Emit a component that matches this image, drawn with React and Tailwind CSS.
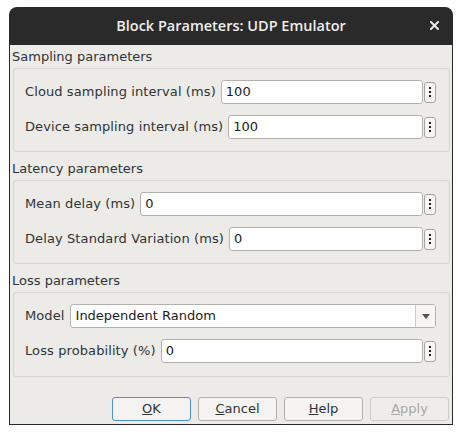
import React from "react";

const font = { fontFamily: '"DejaVu Sans", sans-serif' };

function Dots() {
  return (
    <div className="ml-[1px] flex h-[21px] w-[12px] shrink-0 flex-col items-center justify-center gap-[2px] rounded-[3px] border border-[#a8a5a0] bg-[#f6f5f4]">
      <div className="h-[2px] w-[2px] bg-[#1e1e1e]" />
      <div className="h-[2px] w-[2px] bg-[#1e1e1e]" />
      <div className="h-[2px] w-[2px] bg-[#1e1e1e]" />
    </div>
  );
}

function Field({ label, value }) {
  return (
    <div className="flex h-[24px] items-center">
      <span className="mr-[5px] shrink-0 text-[13px] tracking-[0.1px] text-[#2e3436]">{label}</span>
      <div className="flex h-[24px] flex-1 items-center rounded-[3px] border border-[#b5b2ad] bg-white px-[4px] text-[13px] text-[#1c1c1c]">
        {value}
      </div>
      <Dots />
    </div>
  );
}

function Group({ children, last }) {
  return (
    <div
      className={
        "ml-[3px] mr-[2px] flex flex-col gap-[11px] rounded-[3px] border border-[#d8d5d0] pl-[11px] pr-[13px] pt-[11px] " +
        (last ? "pb-[13px]" : "pb-[12px]")
      }
    >
      {children}
    </div>
  );
}

function Header({ children, first }) {
  return (
    <div className={"flex items-center pl-[2px] text-[13px] text-[#2e3436] " + (first ? "h-[23px]" : "mt-[5px] h-[23px]")}>
      {children}
    </div>
  );
}

function Btn({ children, primary, disabled }) {
  return (
    <div
      className={
        "flex h-[24px] w-[79px] items-center justify-center rounded-[3px] border text-[13px] " +
        (primary
          ? "border-[#4f8fd0] bg-[#f4f3f2] text-[#2e3436]"
          : disabled
          ? "border-[#cfccc7] bg-[#efedea] text-[#a9a7a3]"
          : "border-[#b3b0ab] bg-[#f4f3f2] text-[#2e3436]")
      }
    >
      {children}
    </div>
  );
}

export default function App() {
  return (
    <div className="h-[434px] w-[462px] bg-white pl-[9px] pt-[7px]" style={font}>
      <div className="flex h-[418px] w-[444px] flex-col overflow-hidden rounded-t-[8px]">
        <div className="relative flex h-[38px] shrink-0 items-center justify-center bg-[#2a2a2a]">
          <span
            className="text-[14.5px] font-semibold text-[#eeeeec]"
            style={{ fontFamily: '"Open Sans", sans-serif' }}
          >
            Block Parameters: UDP Emulator
          </span>
          <svg className="absolute left-[421px] top-[14px]" width="9" height="9" viewBox="0 0 9 9">
            <path d="M1 1L8 8M8 1L1 8" stroke="#e8e8e8" strokeWidth="2" strokeLinecap="square" />
          </svg>
        </div>
        <div className="flex flex-1 flex-col border-x border-b border-[#2a2a2a] bg-[#edebe8]">
          <Header first>Sampling parameters</Header>
          <Group>
            <Field label="Cloud sampling interval (ms)" value="100" />
            <Field label="Device sampling interval (ms)" value="100" />
          </Group>
          <Header>Latency parameters</Header>
          <Group>
            <Field label="Mean delay (ms)" value="0" />
            <Field label="Delay Standard Variation (ms)" value="0" />
          </Group>
          <Header>Loss parameters</Header>
          <Group last>
            <div className="flex h-[24px] items-center">
              <span className="mr-[5px] shrink-0 text-[13px] tracking-[0.1px] text-[#2e3436]">Model</span>
              <div className="flex h-[24px] flex-1 items-center rounded-[3px] border border-[#b5b2ad] bg-white text-[13px] text-[#1c1c1c]">
                <span className="flex-1 px-[5px]">Independent Random</span>
                <div className="flex h-full w-[20px] items-center justify-center border-l border-[#cfccc7] bg-[#f6f5f4]">
                  <svg width="8" height="5" viewBox="0 0 8 5">
                    <path d="M0 0H8L4 5Z" fill="#505050" />
                  </svg>
                </div>
              </div>
            </div>
            <Field label="Loss probability (%)" value="0" />
          </Group>
          <div className="ml-[102px] mt-[20px] flex gap-[7px]">
            <Btn primary>
              <span><u>O</u>K</span>
            </Btn>
            <Btn>
              <span><u>C</u>ancel</span>
            </Btn>
            <Btn>
              <span><u>H</u>elp</span>
            </Btn>
            <Btn disabled>
              <span><u>A</u>pply</span>
            </Btn>
          </div>
        </div>
      </div>
    </div>
  );
}
